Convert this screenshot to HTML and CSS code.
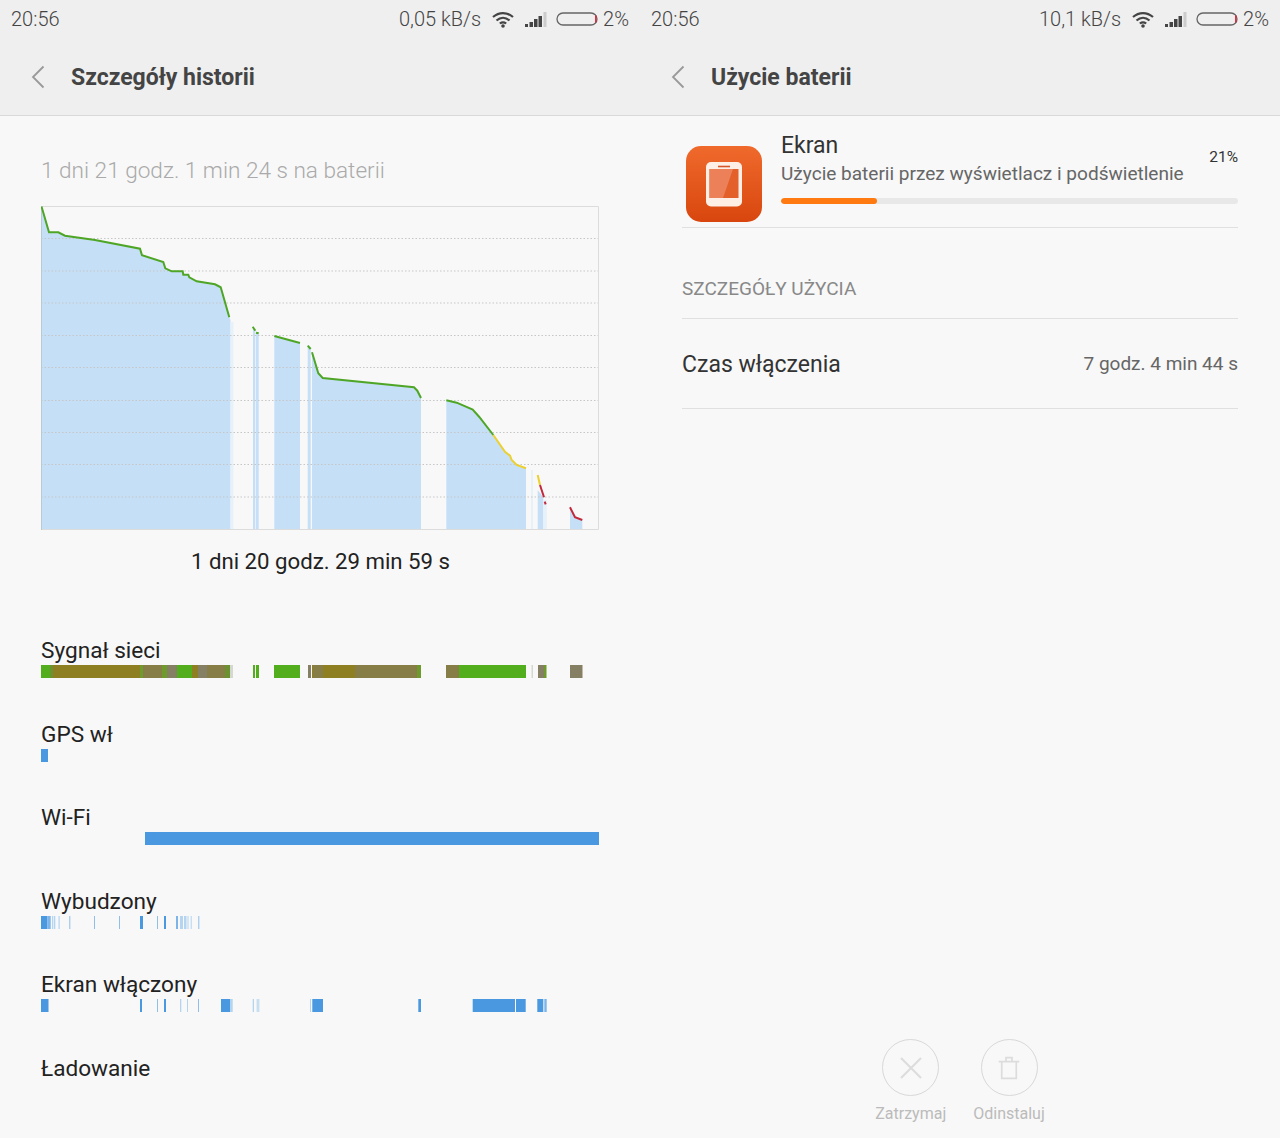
FILE: index.html
```html
<!DOCTYPE html>
<html lang="pl">
<head>
  <meta charset="UTF-8">
  <meta name="viewport" content="width=device-width, initial-scale=1.0">
  <title>bateria</title>
  <link rel="stylesheet" href="styles.css">
</head>
<body>

  <div class="screens">

    <!-- left phone: history details -->
    <section class="pane">
      <header class="top">
        <div class="status">
          <span class="clock">20:56</span>
          <div class="status-right">
            <span class="speed">0,05 kB/s</span>
            <svg class="ic-wifi" viewBox="0 0 22 17"><path d="M1 6C7 .7 15 .7 21 6" /><path d="M4.500 9.500C8.500 6 13.500 6 17.500 9.500" /><path d="M7.800 12.500C10 10.800 12 10.800 14.200 12.500" /><circle cx="11" cy="15" r="1.800" /></svg>
            <svg class="ic-signal" viewBox="0 0 22 16"><rect x="0" y="13" width="3" height="3" /><rect x="4.500" y="11" width="3.500" height="5" /><rect x="9" y="8" width="3.500" height="8" /><rect x="13.500" y="5" width="3.500" height="11" /><rect class="off" x="18.500" y="1" width="3" height="15" /></svg>
            <svg class="ic-batt" viewBox="0 0 43 14"><rect x="1" y="1" width="40" height="12" rx="6" /><path class="low" d="M39.800 3.500V10.500" /></svg>
            <span class="pct">2%</span>
          </div>
        </div>
        <div class="titlebar">
          <svg class="back" viewBox="0 0 14 24"><path d="M12.500 1.500L2 12L12.500 22.500" /></svg>
          <h1>Szczegóły historii</h1>
        </div>
      </header>

      <div class="history">
        <h2>1 dni 21 godz. 1 min 24 s na baterii</h2>

        <!-- viewBox keeps the x/y of the phone screen -->
        <svg class="chart" viewBox="41 206 559 325">
          <g class="area">
            <path d="M41 206.500L49 232.300L58.300 232.300L65 235.700L95 240L140 248.700L142 255.300L163.300 262L165.300 268.300L171.700 271.300L182.700 271.300L183.300 274.700L188.300 274.700L189.300 277.300L196.700 281.300L215 284.300L220.700 287.300L229.300 317.300L230.500 320V530H41Z" />
            <path d="M253 327L255.300 331V530H253Z" />
            <path d="M256 333L258.700 333.500V530H256Z" />
            <path d="M274.300 336L300 343V530H274.300Z" />
            <path d="M307.700 345.700L310.700 349V530H307.700Z" />
            <path d="M312 352.300L318.300 373.300L322.700 378L414 387.300L417.300 390.700L421 398V530H312Z" />
            <path d="M446.300 400.300L456.700 402.700L472.700 409.700L479.300 417L493.300 435L505 451.700L510 455.700L511.700 460L516.700 465L526 468.300V530H446.300Z" />
            <path d="M537.700 490L543.300 497V530H537.700Z" />
            <path d="M570 507.300L575 517.300L582.300 520V530H570Z" />
          </g>
          <g class="area-pale">
            <rect x="230.500" y="322" width="3" height="208" />
            <rect x="531" y="470" width="2" height="60" />
            <rect x="543.300" y="500" width="3.400" height="30" />
          </g>
          <g class="grid">
            <path d="M41 238.500H599" />
            <path d="M41 271H599" />
            <path d="M41 303H599" />
            <path d="M41 335.500H599" />
            <path d="M41 367.500H599" />
            <path d="M41 400.500H599" />
            <path d="M41 432.500H599" />
            <path d="M41 464.500H599" />
            <path d="M41 497H599" />
          </g>
          <path class="frame" d="M41 206.500H598.500V529.500H41" />
          <path class="frame-left" d="M41.500 206V530" />
          <g class="line green">
            <path d="M41.500 206.500L49 232.300L58.300 232.300L65 235.700L95 240L140 248.700L142 255.300L163.300 262L165.300 268.300L171.700 271.300L182.700 271.300L183.300 274.700L188.300 274.700L189.300 277.300L196.700 281.300L215 284.300L220.700 287.300L229.300 317.300" />
            <path d="M252.700 326.700L255.300 330.700" />
            <path d="M256 332.700L258.700 333.300" />
            <path d="M274.300 336L300 343" />
            <path d="M307.700 345.700L310.700 349" />
            <path d="M312 352.300L318.300 373.300L322.700 378L414 387.300L417.300 390.700L421 398" />
            <path d="M446.300 400.300L456.700 402.700L472.700 409.700L479.300 417L493.300 435" />
          </g>
          <g class="line yellow">
            <path d="M493.300 435L505 451.700L510 455.700L511.700 460L516.700 465L526 468.300" />
            <path d="M537.700 475L540 485" />
          </g>
          <g class="line red">
            <path d="M540 485L544 497.300" />
            <path d="M544.700 501.700L545.700 504.300" />
            <path d="M570 507.300L575 517.300L582.300 520" />
          </g>
        </svg>

        <p class="chart-caption">1 dni 20 godz. 29 min 59 s</p>

        <div class="rows">
          <div class="row">
            <div class="row-label">Sygnał sieci</div>
            <svg class="bar" viewBox="41 0 559 13">
              <rect class="s-green" x="41" width="11" height="13" />
              <rect class="s-dark" x="50" width="3" height="13" />
              <rect class="s-olive" x="53" width="87" height="13" />
              <rect class="s-mix" x="140" width="3" height="13" />
              <rect class="s-khaki" x="143" width="19" height="13" />
              <rect class="s-mix" x="162" width="5" height="13" />
              <rect class="s-gray" x="167" width="10" height="13" />
              <rect class="s-green" x="177" width="15" height="13" />
              <rect class="s-olive" x="192" width="6" height="13" />
              <rect class="s-gray" x="198" width="9" height="13" />
              <rect class="s-khaki" x="207" width="18" height="13" />
              <rect class="s-dark" x="225" width="5" height="13" />
              <rect class="s-pale" x="230" width="3" height="13" />
              <rect class="s-green" x="253" width="2" height="13" />
              <rect class="s-green" x="256" width="3" height="13" />
              <rect class="s-green" x="274" width="26" height="13" />
              <rect class="s-gray" x="308" width="3" height="13" />
              <rect class="s-olive" x="312" width="1" height="13" />
              <rect class="s-khaki" x="313" width="10" height="13" />
              <rect class="s-olive" x="323" width="32" height="13" />
              <rect class="s-khaki" x="355" width="62" height="13" />
              <rect class="s-mix" x="417" width="4" height="13" />
              <rect class="s-khaki" x="446" width="13" height="13" />
              <rect class="s-green" x="459" width="67" height="13" />
              <rect class="s-pale" x="531.500" width="1.500" height="13" />
              <rect class="s-gray" x="538" width="6" height="13" />
              <rect class="s-mix" x="544" width="2.500" height="13" />
              <rect class="s-gray" x="570" width="12.500" height="13" />
            </svg>
          </div>

          <div class="row">
            <div class="row-label">GPS wł</div>
            <svg class="bar" viewBox="41 0 559 13">
              <rect class="b-full" x="41" width="7" height="13" />
            </svg>
          </div>

          <div class="row">
            <div class="row-label">Wi-Fi</div>
            <svg class="bar" viewBox="41 0 559 13">
              <rect class="b-full" x="145" width="454" height="13" />
            </svg>
          </div>

          <div class="row">
            <div class="row-label">Wybudzony</div>
            <svg class="bar" viewBox="41 0 559 13">
              <rect class="b-full" x="41" width="6.500" height="13" />
              <rect class="b-mid" x="47.500" width="3.200" height="13" />
              <rect class="b-pale" x="52" width="1.300" height="13" />
              <rect class="b-pale" x="54" width="1.300" height="13" />
              <rect class="b-pale" x="58.500" width="1.200" height="13" />
              <rect class="b-thin" x="69.300" width="1" height="13" />
              <rect class="b-thin" x="94" width="1" height="13" />
              <rect class="b-thin" x="119" width="1" height="13" />
              <rect class="b-full" x="140" width="3" height="13" />
              <rect class="b-thin" x="157" width="1" height="13" />
              <rect class="b-full" x="164" width="2" height="13" />
              <rect class="b-mid" x="176" width="2" height="13" />
              <rect class="b-pale" x="180" width="3" height="13" />
              <rect class="b-pale" x="184" width="2.500" height="13" />
              <rect class="b-pale" x="187.500" width="1" height="13" />
              <rect class="b-pale" x="190.700" width="1" height="13" />
              <rect class="b-thin" x="198.300" width="1" height="13" />
            </svg>
          </div>

          <div class="row">
            <div class="row-label">Ekran włączony</div>
            <svg class="bar" viewBox="41 0 559 13">
              <rect class="b-full" x="41" width="7.500" height="13" />
              <rect class="b-full" x="140" width="2" height="13" />
              <rect class="b-thin" x="157" width="1" height="13" />
              <rect class="b-full" x="164" width="2" height="13" />
              <rect class="b-pale" x="180" width="1.300" height="13" />
              <rect class="b-pale" x="187" width="1" height="13" />
              <rect class="b-thin" x="198" width="1" height="13" />
              <rect class="b-full" x="221" width="9" height="13" />
              <rect class="b-pale" x="230" width="2.700" height="13" />
              <rect class="b-pale" x="252.700" width="1.300" height="13" />
              <rect class="b-pale" x="256.700" width="1" height="13" />
              <rect class="b-pale" x="258.300" width="1" height="13" />
              <rect class="b-pale" x="310" width="1" height="13" />
              <rect class="b-full" x="312.300" width="10.700" height="13" />
              <rect class="b-full" x="418.300" width="2.700" height="13" />
              <rect class="b-full" x="472.700" width="42.300" height="13" />
              <rect class="b-full" x="516" width="9.700" height="13" />
              <rect class="b-full" x="537.300" width="6" height="13" />
              <rect class="b-mid" x="544.300" width="2.400" height="13" />
            </svg>
          </div>

          <div class="row">
            <div class="row-label">Ładowanie</div>
          </div>
        </div>
      </div>
    </section>

    <!-- right phone: battery use -->
    <section class="pane">
      <header class="top">
        <div class="status">
          <span class="clock">20:56</span>
          <div class="status-right">
            <span class="speed">10,1 kB/s</span>
            <svg class="ic-wifi" viewBox="0 0 22 17"><path d="M1 6C7 .7 15 .7 21 6" /><path d="M4.500 9.500C8.500 6 13.500 6 17.500 9.500" /><path d="M7.800 12.500C10 10.800 12 10.800 14.200 12.500" /><circle cx="11" cy="15" r="1.800" /></svg>
            <svg class="ic-signal" viewBox="0 0 22 16"><rect x="0" y="13" width="3" height="3" /><rect x="4.500" y="11" width="3.500" height="5" /><rect x="9" y="8" width="3.500" height="8" /><rect x="13.500" y="5" width="3.500" height="11" /><rect class="off" x="18.500" y="1" width="3" height="15" /></svg>
            <svg class="ic-batt" viewBox="0 0 43 14"><rect x="1" y="1" width="40" height="12" rx="6" /><path class="low" d="M39.800 3.500V10.500" /></svg>
            <span class="pct">2%</span>
          </div>
        </div>
        <div class="titlebar">
          <svg class="back" viewBox="0 0 14 24"><path d="M12.500 1.500L2 12L12.500 22.500" /></svg>
          <h1>Użycie baterii</h1>
        </div>
      </header>

      <div class="usage">
        <div class="app">
          <div class="app-icon">
            <svg viewBox="0 0 36 45">
              <rect class="phone" width="36" height="44.500" rx="5" />
              <rect class="speaker" x="12" y="3.700" width="12" height="1.600" />
              <rect class="screen" x="3.500" y="7" width="29" height="29" />
              <path class="shine" d="M3.500 7H27L17 36H3.500Z" />
            </svg>
          </div>
          <div class="app-body">
            <div class="app-text">
              <div>
                <div class="app-name">Ekran</div>
                <div class="app-desc">Użycie baterii przez wyświetlacz i podświetlenie</div>
              </div>
              <span class="app-pct">21%</span>
            </div>
            <div class="progress"><div class="progress-fill" style="width: 21%"></div></div>
          </div>
        </div>

        <div class="section-title">SZCZEGÓŁY UŻYCIA</div>

        <div class="detail">
          <span class="detail-name">Czas włączenia</span>
          <span class="detail-value">7 godz. 4 min 44 s</span>
        </div>
      </div>

      <div class="actions">
        <div class="action">
          <div class="action-btn">
            <svg viewBox="0 0 24 24"><path d="M2 2L22 22M22 2L2 22" /></svg>
          </div>
          <span>Zatrzymaj</span>
        </div>
        <div class="action">
          <div class="action-btn">
            <svg viewBox="0 0 28 28"><path d="M2 6.500H26M5.500 6.500V26H22.500V6.500M10.500 6.500V2H17.500V6.500" /></svg>
          </div>
          <span>Odinstaluj</span>
        </div>
      </div>
    </section>

  </div>

</body>
</html>
```

FILE: styles.css
```css
* {
  box-sizing: border-box;
}

html, body {
  height: 100%;
}

body {
  margin: 0;
  background: #f8f8f8;
  font-family: Roboto, "Liberation Sans", sans-serif;
  color: #222;
  overflow: hidden;
}

.screens {
  display: grid;
  grid-template-columns: 640px 640px;
  height: 100%;
}

.pane {
  display: flex;
  flex-direction: column;
  height: 100%;
  min-width: 0;
}

/* header */
.top {
  height: 116px;
  background: #efefef;
  border-bottom: 1px solid #d9d9d9;
}

.status {
  display: flex;
  align-items: center;
  justify-content: space-between;
  height: 38px;
  padding: 0 11px;
  font-size: 20px;
  font-weight: 300;
  color: #444;
}

.status-right {
  display: flex;
  align-items: center;
}

.ic-wifi {
  width: 22px;
  height: 17px;
  margin-left: 11px;
  fill: #444;
}

.ic-wifi path {
  fill: none;
  stroke: #444;
  stroke-width: 2.200;
}

.ic-signal {
  width: 22px;
  height: 16px;
  margin-left: 11px;
  fill: #444;
}

.ic-signal .off {
  fill: #ccc;
}

.ic-batt {
  width: 43px;
  height: 14px;
  margin-left: 9px;
}

.ic-batt rect {
  fill: none;
  stroke: #666;
  stroke-width: 1.300;
}

.ic-batt .low {
  fill: none;
  stroke: #d8283c;
  stroke-width: 1.500;
}

.pct {
  margin-left: 4px;
}

.titlebar {
  display: flex;
  align-items: center;
  height: 77px;
  padding-left: 31px;
}

.back {
  width: 14px;
  height: 24px;
  fill: none;
  stroke: #999;
  stroke-width: 1.800;
}

.titlebar h1 {
  margin: 2px 0 0 26px;
  font-size: 23px;
  font-weight: 700;
  color: #444;
}

/* left side */
.history {
  padding: 41px 40px 0 41px;
}

.history h2 {
  margin: 0 0 21px;
  font-size: 22.600px;
  line-height: 28px;
  font-weight: 300;
  color: #aaa;
}

.chart {
  display: block;
  width: 559px;
  height: 325px;
}

.area {
  fill: #c5e0f6;
}

.area-pale {
  fill: #e6f1fa;
}

.grid path {
  stroke: #c6c6c6;
  stroke-width: 1;
  stroke-dasharray: 1.500 2;
  fill: none;
}

.frame {
  fill: none;
  stroke: #dcdcdc;
  stroke-width: 1;
}

.frame-left {
  fill: none;
  stroke: #b9c9d6;
  stroke-width: 1;
}

.line path {
  fill: none;
  stroke-width: 2;
}

.green path {
  stroke: #4fa626;
}

.yellow path {
  stroke: #ecd02f;
}

.red path {
  stroke: #c2283c;
}

.chart-caption {
  margin: 16px 0 0;
  font-size: 22.200px;
  line-height: 28px;
  text-align: center;
  color: #222;
}

.rows {
  display: flex;
  flex-direction: column;
  gap: 42.600px;
  margin-top: 62px;
}

.row-label {
  margin-bottom: 1px;
  font-size: 22.600px;
  line-height: 27px;
  color: #222;
}

.bar {
  display: block;
  width: 559px;
  height: 13px;
}

.s-green { fill: #52ae1c; }
.s-dark { fill: #6c9130; }
.s-olive { fill: #8e7f22; }
.s-mix { fill: #6f9a2c; }
.s-khaki { fill: #867d47; }
.s-gray { fill: #857f63; }
.s-pale { fill: #d5d8cf; }

.b-full { fill: #4a98e0; }
.b-mid { fill: #7db5e8; }
.b-pale { fill: #b4d4f0; }
.b-thin { fill: #8fbee9; }

/* right side */
.usage {
  padding: 0 42px;
}

.app {
  display: flex;
  height: 112px;
  border-bottom: 1px solid #e0e0e0;
  padding-top: 15px;
}

.app-icon {
  display: flex;
  justify-content: center;
  align-items: center;
  flex: none;
  width: 76px;
  height: 76px;
  margin: 15px 19px 0 4px;
  border-radius: 15px;
  background: linear-gradient(#f06a2c, #d8460e);
}

.app-icon svg {
  width: 36px;
  height: 45px;
}

.phone { fill: #fdeee6; }
.speaker { fill: #d8552a; }
.screen { fill: #e4602a; }
.shine { fill: #ec8058; }

.app-body {
  flex: 1;
  min-width: 0;
}

.app-text {
  display: flex;
  justify-content: space-between;
  align-items: center;
}

.app-name {
  font-size: 23px;
  line-height: 30px;
  color: #333;
}

.app-desc {
  font-size: 19.050px;
  line-height: 26px;
  color: #666;
}

.app-pct {
  margin-bottom: 4px;
  font-size: 15.500px;
  color: #333;
}

.progress {
  height: 6px;
  margin-top: 11px;
  border-radius: 3px;
  background: #e8e8e8;
  overflow: hidden;
}

.progress-fill {
  height: 100%;
  border-radius: 3px;
  background: #ff7a10;
}

.section-title {
  display: flex;
  align-items: center;
  height: 91px;
  padding-top: 30px;
  border-bottom: 1px solid #e0e0e0;
  font-size: 19px;
  color: #888;
}

.detail {
  display: flex;
  align-items: center;
  justify-content: space-between;
  height: 90px;
  padding-top: 2px;
  border-bottom: 1px solid #e0e0e0;
}

.detail-name {
  font-size: 23px;
  color: #333;
}

.detail-value {
  margin-bottom: 2px;
  font-size: 19px;
  color: #666;
}

.actions {
  display: flex;
  justify-content: center;
  gap: 27px;
  margin-top: auto;
  padding-bottom: 15px;
}

.action {
  display: flex;
  flex-direction: column;
  align-items: center;
  gap: 8px;
  font-size: 16px;
  line-height: 19px;
  color: #bbb;
}

.action-btn {
  display: flex;
  align-items: center;
  justify-content: center;
  width: 57px;
  height: 57px;
  border: 1.500px solid #d8d8d8;
  border-radius: 50%;
}

.action-btn svg {
  width: 24px;
  height: 24px;
  fill: none;
  stroke: #dcdcdc;
  stroke-width: 2;
}
```
